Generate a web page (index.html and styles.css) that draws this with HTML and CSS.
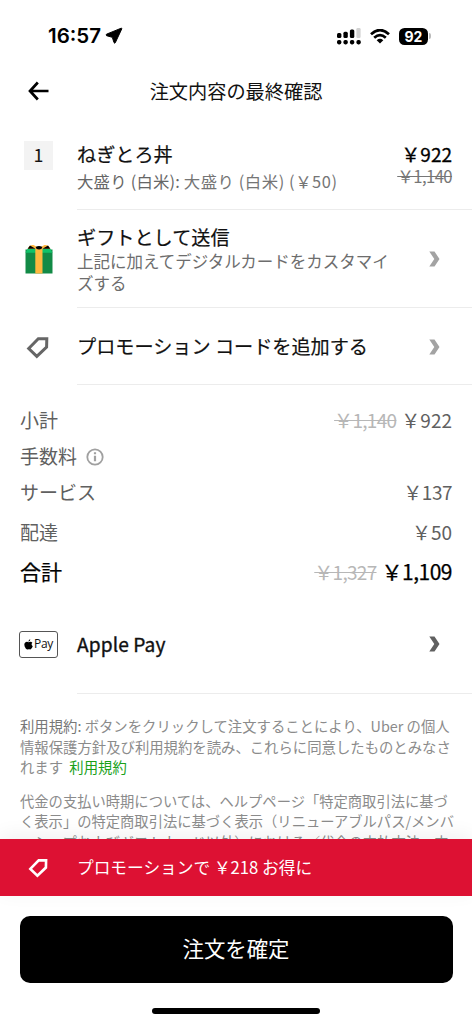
FILE: index.html
```html
<!DOCTYPE html>
<html lang="ja">
<head>
<meta charset="utf-8">
<title>注文内容の最終確認</title>
<link rel="stylesheet" href="styles.css">
</head>
<body>
<main class="content">
  <div class="status">
    <div class="status-left">
      <span class="time">16:57</span>
      <svg width="18" height="18" viewBox="0 0 18 18"><path d="M16.2 1.2 1.5 7.2Q.7 7.900 1.600 8.700L7.300 10.300 9 15.600Q9.600 16.600 10.300 15.700L16.800 1.800Q16.900 1 16.200 1.200Z" stroke="#000" stroke-width="1"/></svg>
    </div>
    <div class="status-right">
      <svg width="24" height="17" viewBox="0 0 24 17"><g><rect x="0" y="5" width="4.4" height="5" rx="1.5"/><rect x="6.4" y="3.8" width="4.4" height="6.2" rx="1.5"/><rect x="12.9" y="1.6" width="4.4" height="8.4" rx="1.5"/><rect x="19.4" y="0" width="4.2" height="10" rx="1.2" fill="#d2d2d2"/><rect x="0" y="12" width="4.4" height="4.4" rx="1.8"/><rect x="6.4" y="12" width="4.4" height="4.4" rx="1.8"/><rect x="12.9" y="12" width="4.4" height="4.4" rx="1.8"/><rect x="19.4" y="12" width="4.4" height="4.4" rx="1.8"/></g></svg>
      <svg class="wifi" width="20" height="15" viewBox="0 0 20 15"><g fill="none" stroke="#000" stroke-width="2.7"><path d="M1 5.2Q10-3 19 5.2"/><path d="M4.2 8.8Q10 3.4 15.8 8.8"/></g><path d="M6.7 11.2Q10 8.3 13.3 11.2L10 14.5Z"/></svg>
      <span class="battery">92</span><i class="battery-tip"></i>
    </div>
  </div>

  <header class="nav">
    <svg class="back" width="22" height="20" viewBox="0 0 22 20"><path d="M20.5 10H2.3M9.8 1.5 2 10l7.8 8.5" fill="none" stroke="#000" stroke-width="2.7"/></svg>
    <h1>注文内容の最終確認</h1>
  </header>

  <section class="row item">
    <div class="lead"><span class="qty">1</span></div>
    <div class="main">
      <div class="name">ねぎとろ丼</div>
      <div class="options"><span class="opt-label">大盛り (白米):</span> <span class="opt-value">大盛り (白米) (&#xFFE5;50)</span></div>
      <div class="item-price"><span class="price-now">&#xFFE5;922</span><s>&#xFFE5;1,140</s></div>
    </div>
  </section>

  <section class="row gift">
    <div class="lead">
      <svg class="gift-icon" width="28" height="30" viewBox="0 0 28 30"><path d="M.5 5.500h27v24H.5z" fill="#128a46"/><path d="M2.800 4.500h22.400l2.300 4.200H.5z" fill="#10c269"/><path d="M10.300 5h7.200v24.500h-7.200z" fill="#ffb83f"/><path d="M2.800 4.700Q4.200.8 8.500 1.100l5.500 3 5.500-3Q23.800.8 25.200 4.700Z" fill="#ffb83f"/><path d="M2.700 4.800 5 1.400 10.500 4.700ZM25.300 4.800 23 1.400 17.500 4.700Z"/><path d="M10.600 3.100Q14 1 17.400 3.100L16.300 5.100Q14 6 11.700 5.100Z"/></svg>
    </div>
    <div class="main">
      <div class="name">ギフトとして送信</div>
      <div class="description">上記に加えてデジタルカードをカスタマイ<br>ズする</div>
    </div>
    <svg class="chevron" width="11" height="16" viewBox="0 0 11 16"><path d="M.3.5h5.200L10.500 8l-5 7.500H.3L5.300 8Z"/></svg>
  </section>

  <section class="row promo">
    <div class="lead"><svg class="tag" width="23" height="23" viewBox="0 0 23 23"><path d="M2.700 12.500 12.300 2.700H20.800l-.2 8.300L10.800 20.300Z"/></svg></div>
    <div class="main"><div class="name">プロモーション コードを追加する</div></div>
    <svg class="chevron" width="11" height="16" viewBox="0 0 11 16"><path d="M.3.5h5.200L10.500 8l-5 7.500H.3L5.300 8Z"/></svg>
  </section>

  <section class="fees">
    <div class="fee"><span>小計</span><span class="amount"><s>&#xFFE5;1,140</s><span>&#xFFE5;922</span></span></div>
    <div class="fee"><span>手数料</span><svg class="info" width="18" height="18" viewBox="0 0 18 18"><circle cx="9" cy="9" r="7.700" fill="none" stroke="#a0a0a0" stroke-width="1.800"/><path d="M7.900 4.200h2.200v2.100H7.900zM7.900 7.700h2.200v5.500H7.900z" fill="#a0a0a0"/></svg></div>
    <div class="fee"><span>サービス</span><span class="amount tight">&#xFFE5;137</span></div>
    <div class="fee tall delivery"><span>配達</span><span class="amount">&#xFFE5;50</span></div>
    <div class="fee tall total"><span>合計</span><span class="amount"><s>&#xFFE5;1,327</s><span class="tight">&#xFFE5;1,109</span></span></div>
  </section>

  <section class="row payment">
    <div class="lead"><span class="pay-card"><svg width="9" height="11" viewBox="0 0 18 21"><path d="M12.500.2Q12.800 3.800 9 5 8.800 1.500 12.500.2ZM9.200 6Q14 3.800 16.800 7.200 13.200 10.500 17.500 13.800 16 18.800 12.800 20.600 11 19.300 9 20 6 21.600 3.500 18.300-1 11.700 1.600 7.600 4.800 3.900 9.200 6Z"/></svg><span>Pay</span></span></div>
    <div class="main"><div class="name apple">Apple Pay</div></div>
    <svg class="chevron" width="11" height="16" viewBox="0 0 11 16"><path d="M.3.5h5.200L10.500 8l-5 7.500H.3L5.300 8Z"/></svg>
  </section>

  <section class="terms">
    <p><span class="terms-label">利用規約:</span> ボタンをクリックして注文することにより、Uber の個人<br>情報保護方針及び利用規約を読み、これらに同意したものとみなさ<br>れます <a>利用規約</a></p>
    <p class="timing">代金の支払い時期については、ヘルプページ「特定商取引法に基づ<br>く表示」の特定商取引法に基づく表示（リニューアブルパス/メンバ<br>ーシップおよびギフトカード以外）における／代金の支払方法、支</p>
  </section>
</main>

<footer class="footer">
  <div class="banner">
    <svg class="tag" width="20" height="20" viewBox="0 0 23 23"><path d="M2.700 12.500 12.300 2.700H20.800l-.2 8.300L10.800 20.300Z"/></svg>
    <span>プロモーションで &#xFFE5;218 お得に</span>
  </div>
  <button class="confirm">注文を確定</button>
  <div class="home"></div>
</footer>
</body>
</html>
```
FILE: styles.css
```css
* { box-sizing: border-box; }
body {
  margin: 0;
  width: 472px;
  height: 1024px;
  overflow: hidden;
  display: flex;
  flex-direction: column;
  background: #fff;
  color: #111;
  font-family: "Noto Sans CJK JP", sans-serif;
  white-space: nowrap;
}
svg { display: block; flex: none; }
.content { height: 839px; overflow: hidden; flex: none; }
.status {
  height: 60px;
  padding: 12px 41px 0 48px;
  display: flex;
  justify-content: space-between;
  align-items: center;
}
.status-left, .status-right { display: flex; align-items: center; }
.status-left { gap: 4px; }
.time { font: 600 20.5px/24px Inter, sans-serif; color: #000; }
.wifi { margin: 0 9px; }
.battery {
  width: 29px;
  height: 17px;
  border-radius: 5.5px;
  background: #000;
  color: #fff;
  font: 700 14px/17px Inter, sans-serif;
  text-align: center;
}
.battery-tip { width: 2px; height: 6px; margin-left: 1px; border-radius: 0 2px 2px 0; background: #bbb; }
.nav {
  height: 62px;
  display: grid;
  grid-template-columns: 77px 1fr 77px;
  align-items: center;
}
.back { margin-left: 28px; }
.nav h1 { margin: 0; text-align: center; font-size: 19.2px; line-height: 28px; font-weight: 400; }
.row { display: flex; padding-right: 32px; position: relative; }
.row::after {
  content: "";
  position: absolute;
  left: 77px;
  right: 0;
  bottom: 0;
  height: 1px;
  background: #ececec;
}
.lead { width: 77px; flex: none; display: flex; align-items: center; }
.main { flex: 1; }
.name { font-size: 19.15px; line-height: 28px; -webkit-text-stroke: .2px currentColor; }
.apple { letter-spacing: .1px; -webkit-text-stroke-width: .35px; }
.item { height: 88px; padding: 18px 20px 0 0; }
.item .lead { align-items: flex-start; padding: 1px 0 0 24px; }
.qty { width: 29px; height: 29px; background: #f3f3f3; text-align: center; font-size: 17px; line-height: 28px; -webkit-text-stroke: .2px currentColor; }
.item .main { display: grid; grid-template-columns: 1fr auto; align-content: start; }
.item .name, .options { grid-column: 1; }
.options { font-size: 16.4px; line-height: 26px; color: #757575; }
.opt-label { color: #666; letter-spacing: .2px; }
.opt-value { letter-spacing: .55px; }
.item-price {
  grid-column: 2;
  grid-row: 1 / 3;
  display: flex;
  flex-direction: column;
  align-items: flex-end;
  font-size: 16.7px;
  line-height: 17px;
  color: #777;
}
.price-now { font-size: 19px; line-height: 28px; color: #000; -webkit-text-stroke: .3px currentColor; }
.item-price s { letter-spacing: -.6px; }
.gift { height: 98px; padding-bottom: 1px; align-items: center; }
.gift-icon { margin-left: 25px; }
.description { font-size: 16.5px; line-height: 22px; color: #6d6d6d; }
.gift .name { line-height: 26px; }
.chevron { fill: #a3a3a3; }
.promo { height: 77px; align-items: center; }
.promo .main { padding-bottom: 1px; }
.tag { fill: none; stroke: #666; stroke-width: 3; }
.promo .tag { margin: 2px 0 0 26px; }
.fees { height: 210px; padding: 16px 20px 0; color: #606060; font-size: 19px; }
.fee { height: 36px; display: flex; align-items: center; }
.fee.tall { height: 40px; }
.delivery { margin-top: 2px; }
.fee s { color: #b7b7b7; letter-spacing: -.7px; margin-right: 5px; font-size: 19px; }
.amount { margin-left: auto; }
.tight { letter-spacing: -.5px; }
.info { margin: 3px 0 0 9px; }
.total { font-size: 21px; color: #000; -webkit-text-stroke: .25px currentColor; }
.total s { -webkit-text-stroke: 0; }
.payment { height: 99px; align-items: center; }
.payment .main { padding-bottom: 2px; }
.payment .chevron { margin-bottom: 2px; fill: #606060; }
.pay-card {
  width: 39px;
  height: 27px;
  margin-left: 19px;
  margin-bottom: 1px;
  border: 1.5px solid #555;
  border-radius: 3px;
  display: flex;
  align-items: center;
  justify-content: center;
  gap: 1px;
  font: 400 12px/20px "Open Sans", sans-serif;
  letter-spacing: -.3px;
}
.terms { padding: 22px 20px 0; font-size: 14.37px; line-height: 20.5px; color: #8b8b8b; }
.terms p { margin: 0 0 13px; }
.terms .timing { font-size: 14.3px; }
.terms-label { color: #777; }
.terms a { color: #19a119; margin-left: 3px; }
.footer { flex: 1; position: relative; background: #fff; display: flex; flex-direction: column; align-items: center; }
.banner {
  width: 472px;
  height: 57px;
  display: flex;
  align-items: center;
  gap: 29px;
  padding-left: 28px;
  background: #dd1133;
  color: #fff;
  font-size: 16.7px;
  box-shadow: 0 -4px 20px rgba(0, 0, 0, .06);
}
.banner .tag { stroke: #fff; }
.banner span { padding-bottom: 1px; }
.confirm {
  width: 433px;
  height: 67px;
  margin: 20px 0 25px;
  padding: 0 0 3px;
  border: 0;
  border-radius: 10px;
  background: #000;
  color: #fff;
  font: 400 21.4px/30px "Noto Sans CJK JP", sans-serif;
}
.home { width: 168px; height: 6px; border-radius: 3px; background: #000; }
```
